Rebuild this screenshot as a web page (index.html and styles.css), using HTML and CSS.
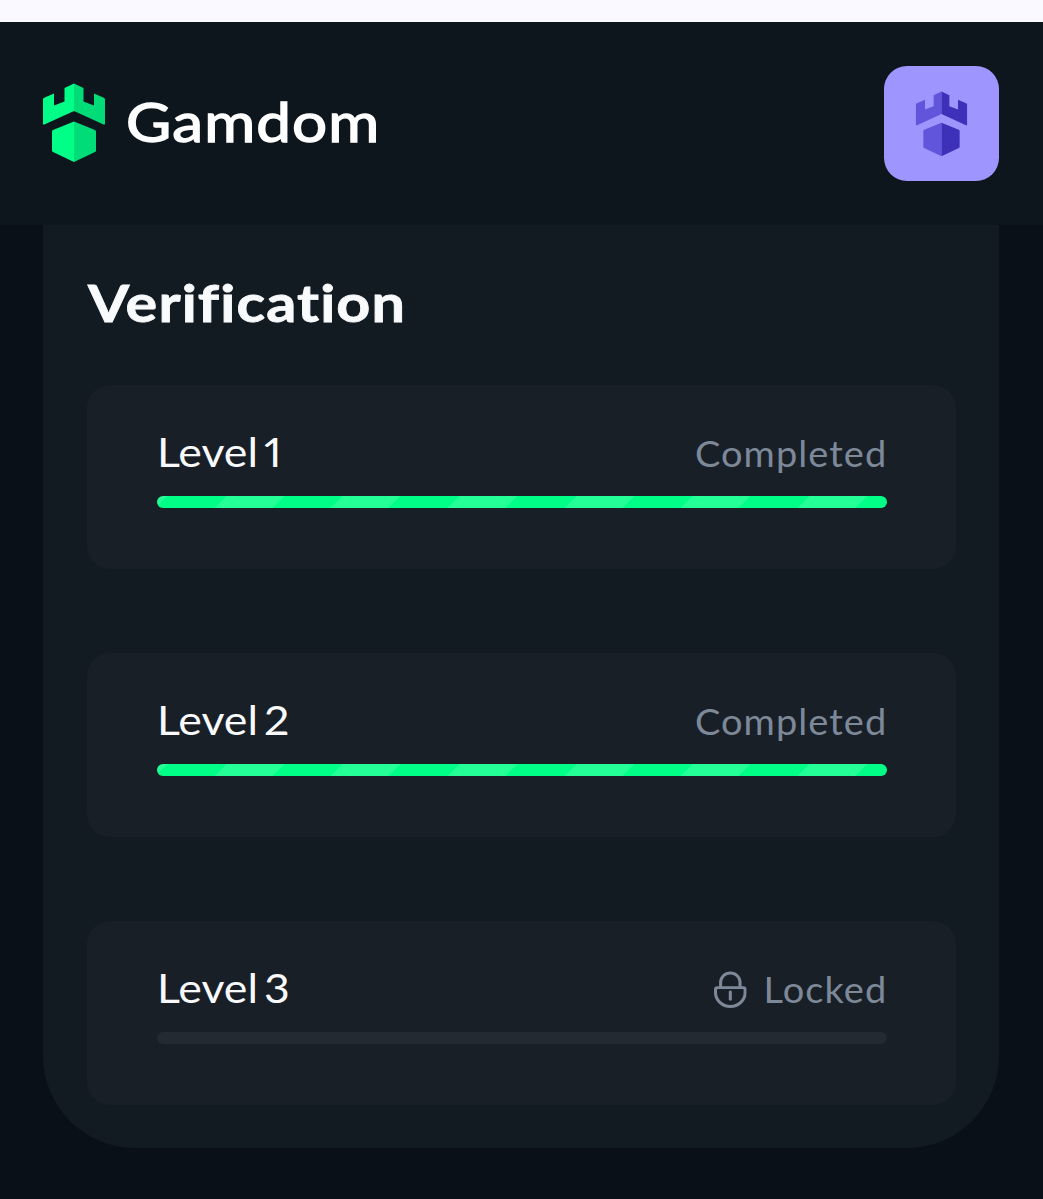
FILE: index.html
```
<!DOCTYPE html>
<html lang="en">
<head>
    <meta charset="UTF-8">
    <meta name="viewport" content="width=device-width, initial-scale=1.0">
    <title>Gamdom - Verification</title>
    <link rel="stylesheet" href="styles.css">
</head>
<body>
    <div class="top-strip"></div>
    <header class="header">
        <div class="brand">
            <svg class="brand-icon" viewBox="0 0 64 80">
                <path fill="#00ff86" d="M32 .5 22.500 5v13.500L12 22.500V10.500L2.200 14.800q-1.200.5-1.200 1.700V40.500q0 1.500 1.400 1L32 28Z"/>
                <path fill="#00dc78" d="M32 .5 41.500 5v13.500L52 22.500V10.500L61.800 14.800q1.200.5 1.200 1.700V40.500q0 1.500-1.400 1L32 28Z"/>
                <path fill="#00ff86" d="M32 38.500 11 47q-1 .5-1 1.500v19q0 1 1 1.500l21 10Z"/>
                <path fill="#00dc78" d="M32 38.500 53 47q1 .5 1 1.500v19q0 1-1 1.500l-21 10Z"/>
            </svg>
            <span class="brand-name">Gamdom</span>
        </div>
        <button class="avatar">
            <svg class="avatar-icon" viewBox="0 0 64 80">
                <path fill="#6155dc" d="M32 .5 22.500 5v13.500L12 22.500V10.500L2.200 14.800q-1.200.5-1.200 1.700V40.500q0 1.500 1.400 1L32 28Z"/>
                <path fill="#3e31b9" d="M32 .5 41.500 5v13.500L52 22.500V10.500L61.800 14.800q1.200.5 1.200 1.700V40.500q0 1.500-1.400 1L32 28Z"/>
                <path fill="#6155dc" d="M32 38.500 11 47q-1 .5-1 1.500v19q0 1 1 1.500l21 10Z"/>
                <path fill="#3e31b9" d="M32 38.500 53 47q1 .5 1 1.500v19q0 1-1 1.500l-21 10Z"/>
            </svg>
        </button>
    </header>
    <main class="panel">
        <h1 class="title">Verification</h1>
        <div class="levels">
            <section class="level">
                <div class="level-head">
                    <span class="level-name">Level 1</span>
                    <span class="status">Completed</span>
                </div>
                <div class="bar done"></div>
            </section>
            <section class="level">
                <div class="level-head">
                    <span class="level-name">Level 2</span>
                    <span class="status">Completed</span>
                </div>
                <div class="bar done"></div>
            </section>
            <section class="level">
                <div class="level-head">
                    <span class="level-name">Level 3</span>
                    <span class="status">
                        <svg class="lock" viewBox="0 0 32 38" fill="none" stroke="#7d8998" stroke-width="3" stroke-linecap="round" stroke-linejoin="round">
                            <path d="M6.500 16.500V11a9.500 9.500 0 0 1 19 0v5.500"/>
                            <path d="M3.500 16.500h25q2 0 2 2V21.500a14.500 14.500 0 0 1-29 0v-3q0-2 2-2Z"/>
                            <path d="M16 21v7.500"/>
                        </svg>
                        Locked
                    </span>
                </div>
                <div class="bar"></div>
            </section>
        </div>
    </main>
</body>
</html>
```

FILE: styles.css
```
* {
    box-sizing: border-box;
}
body {
    margin: 0;
    height: 1199px;
    background-color: #091017;
    color: #f9fafc;
    font-family: Lato, "Liberation Sans", sans-serif;
}
.top-strip {
    height: 22px;
    background-color: #f9f9ff;
}
.header {
    display: flex;
    justify-content: space-between;
    align-items: center;
    height: 203px;
    padding: 0 44px 0 42px;
    background-color: #0e161d;
}
.brand {
    display: flex;
    align-items: center;
    gap: 20px;
    padding-bottom: 2px;
}
.brand-icon {
    width: 64px;
    height: 80px;
}
.brand-name {
    color: #fff;
    font-size: 55px;
    font-weight: 400;
    line-height: 72px;
    padding-bottom: 4px;
    letter-spacing: 1px;
    -webkit-text-stroke: 1.4px #fff;
    transform: scaleX(1.127);
    transform-origin: left;
}
.avatar {
    display: flex;
    justify-content: center;
    align-items: center;
    width: 115px;
    height: 115px;
    padding: 0;
    border: none;
    border-radius: 23px;
    background-color: #9f95ff;
}
.avatar-icon {
    width: 53px;
    height: 66px;
}
.panel {
    height: 923px;
    margin: 0 44px 0 43px;
    padding: 45px 43px 0 44px;
    background-color: #131b22;
    border-radius: 0 0 92px 92px;
}
.title {
    margin: 0 0 0 1px;
    font-size: 52px;
    font-weight: 700;
    line-height: 64px;
    letter-spacing: 1px;
    -webkit-text-stroke: 0.8px #f9fafc;
    transform: scaleX(1.14);
    transform-origin: left;
}
.levels {
    display: flex;
    flex-direction: column;
    gap: 84px;
    margin-top: 51px;
}
.level {
    height: 184px;
    padding: 42px 69px 0 70px;
    background-color: #181f27;
    border-radius: 23px;
}
.level-head {
    display: flex;
    justify-content: space-between;
    align-items: center;
    height: 52px;
}
.level-name {
    padding-bottom: 4px;
    font-size: 41px;
    font-variant-numeric: proportional-nums;
    word-spacing: -5px;
    transform: scaleX(1.09);
    transform-origin: left;
}
.status {
    display: flex;
    align-items: center;
    color: #7d8998;
    font-size: 36px;
    letter-spacing: 1px;
    transform: scaleX(1.055);
    transform-origin: right;
}
.lock {
    width: 31px;
    height: 38px;
    margin-top: 2px;
    margin-right: 16px;
}
.bar {
    height: 12px;
    margin-top: 17px;
    border-radius: 6px;
    background-color: #232a32;
}
.bar.done {
    background-image: repeating-linear-gradient(135deg, #24ff97 0, #24ff97 7.5px, #00ff86 7.5px, #00ff86 49px, #24ff97 49px, #24ff97 82.5px);
}
```
